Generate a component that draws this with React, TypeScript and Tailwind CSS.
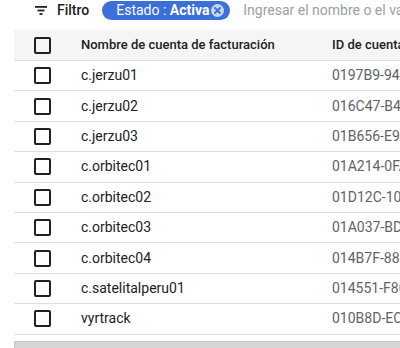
import React from 'react';

const rows = [
  { name: 'c.jerzu01', id: '0197B9-942A1C-5D3E07' },
  { name: 'c.jerzu02', id: '016C47-B4E2F1-0A9D36' },
  { name: 'c.jerzu03', id: '01B656-E94C20-7F1B88' },
  { name: 'c.orbitec01', id: '01A214-0FA3D7-C62E41' },
  { name: 'c.orbitec02', id: '01D12C-10B8E5-4D7A92' },
  { name: 'c.orbitec03', id: '01A037-BD6C14-E0F923' },
  { name: 'c.orbitec04', id: '014B7F-883D2A-19C5E6' },
  { name: 'c.satelitalperu01', id: '014551-F80E3B-6A2D74' },
  { name: 'vyrtrack', id: '010B8D-EC41F9-B3072A' },
];

const Checkbox = () => (
  <span className="block w-[17px] h-[17px] border-2 border-[#202124] rounded-[2px]" />
);

export default function App() {
  return (
    <div
      className="w-[400px] h-[348px] overflow-hidden bg-white text-[#202124]"
      style={{ fontFamily: 'Roboto, "Liberation Sans", sans-serif' }}
    >
      {/* filter bar */}
      <div className="flex items-center h-[20px] pl-[35px] whitespace-nowrap">
        <svg width="12" height="9" viewBox="0 0 12 9" className="mr-[10px] shrink-0">
          <rect x="0" y="0" width="12" height="1.8" fill="#202124" />
          <rect x="2.5" y="3.6" width="7" height="1.8" fill="#202124" />
          <rect x="4.5" y="7.2" width="3" height="1.8" fill="#202124" />
        </svg>
        <span className="text-[14px] font-medium mr-[13px] shrink-0">Filtro</span>
        <div className="flex items-center shrink-0 h-[19px] w-[128px] rounded-full bg-[#3b6fd9] pl-[14px] pr-[6px] text-white text-[14px] mr-[13px]">
          <span>Estado :&nbsp;</span>
          <span className="font-bold">Activa</span>
          <span className="ml-auto flex items-center justify-center w-[13px] h-[13px] rounded-full bg-[#c9d7f5]">
            <svg width="7" height="7" viewBox="0 0 7 7">
              <path d="M1 1L6 6M6 1L1 6" stroke="#3b6fd9" strokeWidth="1.8" strokeLinecap="round" />
            </svg>
          </span>
        </div>
        <span className="text-[14px] text-[#9aa0a6]">Ingresar el nombre o el valor de la propiedad</span>
      </div>

      {/* table */}
      <div className="ml-[14px] mt-[10px] w-[500px]">
        <div className="flex items-center h-[31px] bg-[#f5f5f5] border-b border-[#e0e0e0] text-[13px] font-medium whitespace-nowrap">
          <div className="w-[67px] pl-[20px] shrink-0">
            <Checkbox />
          </div>
          <div className="w-[251px] shrink-0">Nombre de cuenta de facturación</div>
          <div>ID de cuenta de facturación</div>
        </div>
        {rows.map((r) => (
          <div
            key={r.name}
            className="flex items-center h-[30.4px] border-b border-[#e0e0e0] text-[14px] whitespace-nowrap"
          >
            <div className="w-[67px] pl-[20px] shrink-0">
              <Checkbox />
            </div>
            <div className="w-[251px] shrink-0 text-[#202124]">{r.name}</div>
            <div className="text-[#5f6368]">{r.id}</div>
          </div>
        ))}
        <div className="mt-[6px] h-[10px] bg-[#d6d6d6] border border-[#c4c4c4]" />
      </div>
    </div>
  );
}
